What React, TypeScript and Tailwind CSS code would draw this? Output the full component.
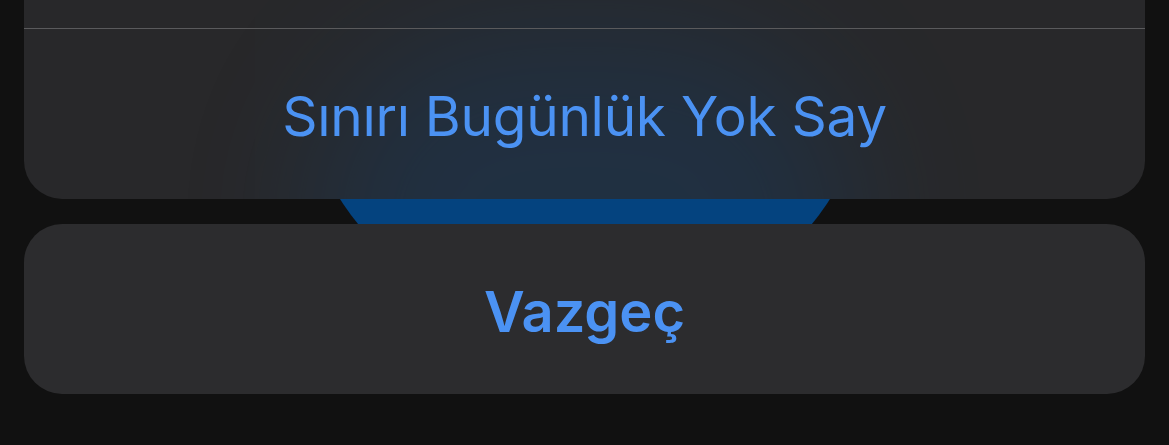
export default function App() {
  return (
    <div
      className="relative h-[445px] w-full overflow-hidden bg-[#111111] px-[24px]"
      style={{ fontFamily: "Inter, 'Noto Sans', sans-serif" }}
    >
      {/* blue button behind the sheet */}
      <div className="absolute left-[294px] top-[-249px] h-[582px] w-[582px] rounded-full bg-[#04437f]" />

      <div className="relative z-10 flex flex-col gap-[25px]">
        <div className="relative overflow-hidden rounded-b-[38px] bg-[#28282a]">
          {/* frosted glow of the button seen through the sheet */}
          <div className="absolute left-[290px] top-[30px] h-[380px] w-[540px] rounded-full bg-[#0a4a8c] opacity-[0.24] blur-[70px]" />
          <div className="relative h-[28px]" />
          <div className="relative h-px bg-[#5a5a5c]" />
          <button className="relative flex h-[170px] w-full items-center justify-center pt-[4px] text-[55px] font-normal tracking-[-0.3px] text-[#4b92f3]">
            Sınırı Bugünlük Yok Say
          </button>
        </div>

        <button className="flex h-[170px] w-full items-center justify-center rounded-[38px] bg-[#2c2c2e] pt-[6px] text-[56px] font-semibold text-[#4b92f3]">
          Vazgeç
        </button>
      </div>
    </div>
  );
}
